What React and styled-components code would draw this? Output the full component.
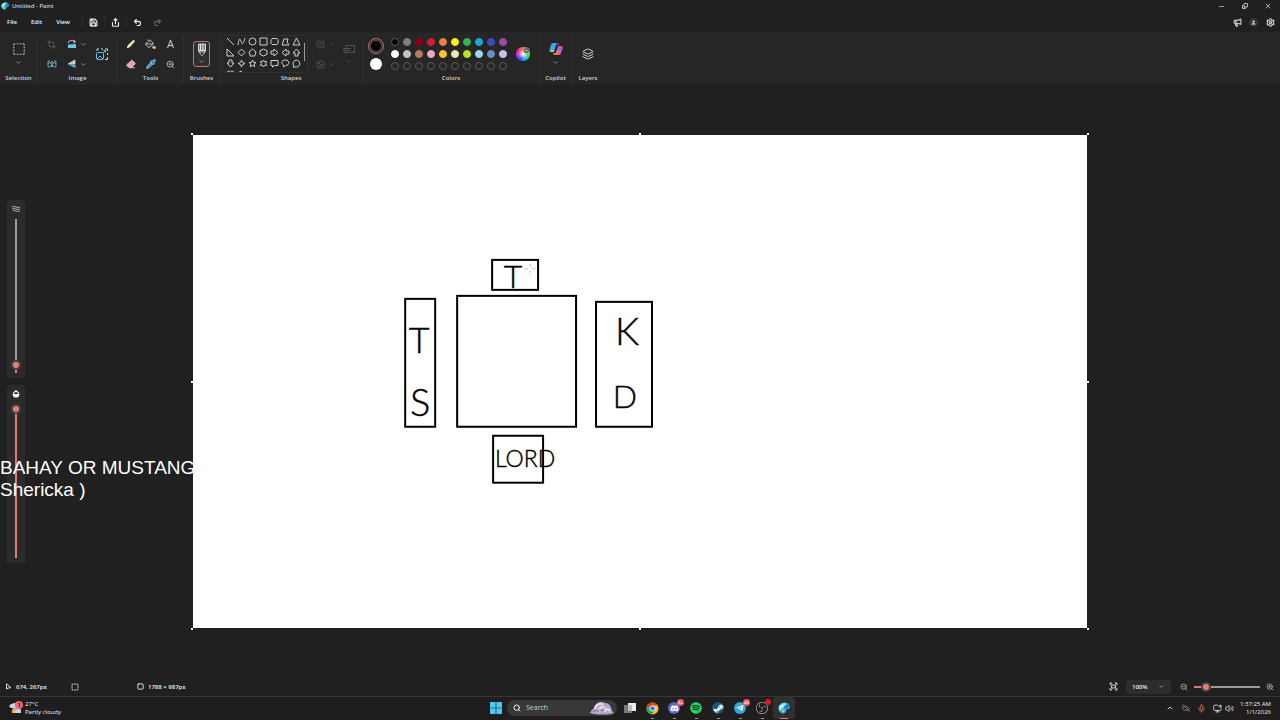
import React, { useState } from 'react'
import styled, { createGlobalStyle } from 'styled-components'
import {
  ChevronDown, ChevronUp, Crop, Eraser, Fullscreen, Layers, Megaphone, Mic, Minus, MonitorDot,
  Pipette, PaintBucket, Redo2, Save, Settings, Share, Square, SquareDashed, SquarePen,
  Undo2, User, Volume2, X, ZoomIn, ZoomOut, Search, CloudOff, Copy, ImageOff,
} from 'lucide-react'
import { FaDiscord, FaSpotify, FaSteamSymbol, FaTelegramPlane } from 'react-icons/fa'
import { SiObsstudio } from 'react-icons/si'

const PALETTE = [
  '#000000', '#7f7f7f', '#880015', '#d81b2c', '#e8823c', '#fdf01e', '#35b552', '#1ea5dc', '#4048bd', '#a04aa2',
  '#ffffff', '#c3c3c3', '#b97a57', '#f0a6c5', '#fbc623', '#eee4b0', '#b5e61d', '#99d9ea', '#6f8fc4', '#c8bfe7',
]

const SHAPES = [
  ['Line', 'M1 1L8 8'],
  ['Curve', 'M1 8C2 1 3 1 4 4S6 9 8 1'],
  ['Oval', 'M4.500 1a3.500 3.500 0 1 0 0 7a3.500 3.500 0 1 0 0-7z'],
  ['Rectangle', 'M1 1h7v7H1z'],
  ['Rounded rectangle', 'M2 1.500h5l1 1v4l-1 1H2l-1-1v-4z'],
  ['Polygon', 'M1 8L3 2h4L6 5l2 3z'],
  ['Triangle', 'M4.500 1L8 8H1z'],
  ['Right triangle', 'M1 1v7h7z'],
  ['Diamond', 'M4.500 1L8 4.500 4.500 8 1 4.500z'],
  ['Pentagon', 'M4.500 1L8 4 6.700 8H2.300L1 4z'],
  ['Hexagon', 'M4.500 1L8 2.700v3.600L4.500 8 1 6.300V2.700z'],
  ['Right arrow', 'M1 3h3V1l4 3.500L4 8V6H1z'],
  ['Left arrow', 'M8 3H5V1L1 4.500 5 8V6h3z'],
  ['Up arrow', 'M3 8V5H1l3.500-4L8 5H6v3z'],
  ['Down arrow', 'M3 1v3H1l3.500 4L8 4H6V1z'],
  ['Four-point star', 'M4.500 1l1 2.500 2.500 1-2.500 1-1 2.500-1-2.500-2.500-1 2.500-1z'],
  ['Five-point star', 'M4.500 1l1 2.300 2.500.2-1.900 1.600.6 2.600-2.200-1.300-2.200 1.300.6-2.600L1 3.500l2.500-.2z'],
  ['Six-point star', 'M4.500 1l1 1.700h2.200L6.600 4.500l1.100 1.800H5.500l-1 1.700-1-1.700H1.300l1.100-1.800-1.100-1.800h2.200z'],
  ['Rectangular callout', 'M1 1.500h7v5H4.500L2.500 8V6.500H1z'],
  ['Oval callout', 'M4.500 1C9 1 9 6.500 4.500 6.500L2.500 8V6C0 5 0 1 4.500 1z'],
  ['Cloud callout', 'M2 7a3.400 3.400 0 1 1 2 1H1z'],
  ['Heart', 'M4.500 8L1 4C0 1 4 0 4.500 2.500 5 0 9 1 8 4z'],
  ['Lightning', 'M1 3l3-2 4 7-4-3z'],
]

const HANDLES = [
  [0, 0], [50, 0], [100, 0], [0, 50], [100, 50], [0, 100], [50, 100], [100, 100],
]

function Chevron({ dim }) {
  return <ChevronDown size={7} color={dim ? '#5c5c5c' : '#c8c8c8'} />
}

function RotateIcon() {
  return (
    <svg width="10" height="10" viewBox="0 0 10 10" fill="none">
      <path d="M1 4C2 1 5 1 8 2.500M6.500 1L8.500 2.700 6.300 4" stroke="#d8d8d8" />
      <path d="M1 5.500L9 5v4H1z" fill="#6fc4e8" />
    </svg>
  )
}

function FlipIcon() {
  return (
    <svg width="10" height="10" viewBox="0 0 10 10" fill="none">
      <path d="M8 1L1 5h7z" fill="#b9c6cc" stroke="#d8d8d8" strokeWidth=".8" />
      <path d="M1 5.500h7.500V9z" fill="#5db4dc" />
    </svg>
  )
}

function RemoveBackgroundIcon() {
  return (
    <svg width="10" height="10" viewBox="0 0 10 10" fill="none">
      <path d="M3 2H1v6h2M7 2h2v6H7M1 5l2-2M9 5L7 3" stroke="#8bb2c4" strokeWidth=".8" />
      <circle cx="5" cy="4" r="1.300" stroke="#9ed1e9" strokeWidth=".8" />
      <path d="M3.200 8c0-3 3.600-3 3.600 0z" fill="#4ba7d0" />
    </svg>
  )
}

function ResizeIcon() {
  return (
    <svg width="14" height="14" viewBox="0 0 14 14" fill="none">
      <path d="M2 4V2h2M6 2h2M10 2h2.500v2M12.500 6v2M12.500 10v2.500H10" stroke="#c6dbe5" />
      <rect x="1.500" y="5.500" width="7" height="7" rx="1" stroke="#5bbce8" />
      <path d="M2 12l3-3 3 3M8 6l2.500-2.500M8.500 3.500h2v2" stroke="#5bbce8" />
    </svg>
  )
}

function PencilIcon() {
  return (
    <svg width="10" height="10" viewBox="0 0 10 10">
      <path d="M1 9l1-3 5.500-5.200L9 2.300 4 8z" fill="#f0e79a" />
      <path d="M1 9l.7-2 1.400 1.300z" fill="#fff" />
    </svg>
  )
}

function FillIcon() {
  return (
    <FillDrawing>
      <PaintBucket size={10} color="#c9dde6" />
      <svg width="3" height="3" viewBox="0 0 3 3"><circle cx="1.500" cy="1.500" r="1.500" fill="#e9a878" /></svg>
    </FillDrawing>
  )
}

function BrushIcon() {
  return (
    <svg width="10" height="14" viewBox="0 0 10 14">
      <path d="M1.500 1h7v7L5 13 1.500 8z" fill="#77797b" stroke="#d5d5d5" />
      <path d="M3.500 1v6M6 1v6M2 7.500h6" stroke="#e8e8e8" />
      <path d="M3.500 10h3L5 13z" fill="#202020" />
    </svg>
  )
}

function ColorWheelIcon() {
  return (
    <Wheel>
      <svg width="7" height="7" viewBox="0 0 7 7">
        <circle cx="3.500" cy="3.500" r="2.700" fill="#444" stroke="#999" />
        <path d="M3.500 2v3M2 3.500h3" stroke="#ccc" strokeWidth=".7" />
      </svg>
    </Wheel>
  )
}

function CopilotIcon() {
  return (
    <svg width="14" height="14" viewBox="0 0 14 14">
      <path d="M4 1h4c1 0 1.500 1 1.800 2H7L5 10H2C0 10 0 8 1 6l1-3c.4-1.300 1-2 2-2z" fill="#39a8e8" />
      <path d="M2 8h3l-.6 2H2C1 10 1 9 2 8z" fill="#f3bf48" />
      <path d="M10 13H6c-1 0-1.500-1-1.800-2H7l2-7h3c2 0 2 2 1 4l-1 3c-.4 1.300-1 2-2 2z" fill="#dc5a9b" />
      <path d="M8.500 6h4.800l-1 3H7.700z" fill="#9b62df" />
      <path d="M4.200 11H7l.6-2.500h3L10 13H6c-1 0-1.500-1-1.800-2z" fill="#ed775d" />
      <path d="M7 1h1c1 0 1.500 1 1.800 2H7z" fill="#315ec8" />
    </svg>
  )
}

function PaintLogo({ size }) {
  return (
    <svg width={size} height={size} viewBox="0 0 12 12">
      <path d="M6 .5c4-.5 6.500 3 5.500 5.500-.8 1.500-2.500.5-3 1.600C8 9 8 11 5.500 11.500 2 11.500 0 8 .5 5 1.300 2.500 3 .8 6 .5z" fill="#35b6df" />
      <path d="M1 4L6 1l2 1-5 6-2 .3z" fill="#9be4f5" />
      <path d="M6 5l4-3 1.500 2-4 3z" fill="#1876b8" />
      <circle cx="4" cy="4" r="1" fill="#fff" />
      <circle cx="5" cy="9" r="1" fill="#f2c15b" />
    </svg>
  )
}

function ChromeLogo() {
  return (
    <svg width="13" height="13" viewBox="0 0 24 24">
      <circle cx="12" cy="12" r="11" fill="#fbc116" />
      <path d="M2.500 6.500A11 11 0 0 1 21.500 6.500H12L7.500 14.500z" fill="#e33b2e" />
      <path d="M2.500 6.500A11 11 0 0 0 11 23l5.500-8.500h-9z" fill="#2ba24c" />
      <circle cx="12" cy="12" r="5.500" fill="#fff" />
      <circle cx="12" cy="12" r="4.200" fill="#2f7de1" />
    </svg>
  )
}

function WindowsLogo() {
  return (
    <svg width="12" height="12" viewBox="0 0 12 12">
      <path d="M0 0h5.700v5.700H0zM6.300 0H12v5.700H6.300zM0 6.300h5.700V12H0zM6.300 6.300H12V12H6.300z" fill="#4cc8f2" />
    </svg>
  )
}

function TaskViewIcon() {
  return (
    <svg width="12" height="12" viewBox="0 0 12 12">
      <path d="M0 3h8v8H0z" fill="#777" />
      <path d="M4 1h8v8H4z" fill="#ededed" />
      <path d="M4 3h4v6H4z" fill="#bcbcbc" />
    </svg>
  )
}

function SearchArt() {
  return (
    <svg width="26" height="14" viewBox="0 0 26 14">
      <path d="M1 12C3 8 4 9 6 5 8 1 12 0 16 2c5 0 6 4 7 8l2 2c-6 2-18 2-24 0z" fill="#b7a8cc" />
      <path d="M6 8c0-4 5-7 8-4M11 11C9 7 13 4 16 7M16 11c0-3 3-4 5-1" fill="none" stroke="#e6ddec" strokeWidth="2" />
      <path d="M10 9c2 2 4-1 5 1M4 11c3-2 4-2 6 0" fill="none" stroke="#75678e" />
    </svg>
  )
}

function WeatherIcon() {
  return (
    <svg width="14" height="14" viewBox="0 0 14 14">
      <path d="M3 12a3 3 0 0 1 9-3v3z" fill="#f4a24b" />
      <path d="M2 7a2 2 0 0 1 1-4 3 3 0 0 1 5 1v3zM6 12a2 2 0 0 1 1-3 3 3 0 0 1 5 1v2z" fill="#bdd7f4" />
      <circle cx="10" cy="4" r="4" fill="#ee6375" />
      <path d="M9.500 3l1-1v4" stroke="#671d2a" fill="none" />
    </svg>
  )
}

function PointerIcon() {
  return (
    <svg width="7" height="7" viewBox="0 0 7 7">
      <path d="M1.500.8v5.400L3 5l3-.3z" fill="none" stroke="#d8d8d8" />
    </svg>
  )
}

function Drawing() {
  return (
    <Artwork viewBox="193 135 894 493" role="img" aria-label="Seating plan">
      <g fill="none" stroke="#000" strokeWidth="2">
        <rect x="492" y="260" width="46" height="30" />
        <rect x="457" y="296" width="119" height="131" />
        <rect x="405" y="299" width="30" height="128" />
        <rect x="596" y="302" width="56" height="125" />
        <rect x="493" y="436" width="50" height="47" />
      </g>
      <g textAnchor="middle" fill="#000" stroke="#000" strokeWidth=".4">
        <text x="513" y="288" fontSize="32">T</text>
        <text x="419" y="353" fontSize="36">T</text>
        <text x="420" y="416" fontSize="38">S</text>
        <text x="627" y="345" fontSize="38">K</text>
        <text x="625" y="408" fontSize="32">D</text>
        <text x="525" y="467" fontSize="23">LORD</text>
      </g>
      <path d="M525 269h4M532 269h4M530 264v3M530 271v3" stroke="#999" strokeDasharray="1 1" />
    </Artwork>
  )
}

function App() {
  const [size, setSize] = useState(2)
  const [opacity, setOpacity] = useState(100)
  const [zoom, setZoom] = useState(12)

  return (
    <>
      <GlobalStyle />
      <Window>
        <TitleBar>
          <PaintLogo size={8} />
          <Title>Untitled - Paint</Title>
          <WindowControls>
            <WindowButton aria-label="Minimize"><Minus size={7} /></WindowButton>
            <WindowButton aria-label="Restore"><RestoreIcon size={6} strokeWidth={3} /></WindowButton>
            <WindowButton aria-label="Close"><X size={8} /></WindowButton>
          </WindowControls>
        </TitleBar>

        <MenuBar>
          <Menus>
            <MenuButton>File</MenuButton>
            <MenuButton>Edit</MenuButton>
            <MenuButton>View</MenuButton>
          </Menus>
          <QuickButton aria-label="Save"><Save size={9} strokeWidth={3} /></QuickButton>
          <QuickButton aria-label="Share"><Share size={9} strokeWidth={3} /></QuickButton>
          <QuickButton aria-label="Undo"><Undo2 size={9} strokeWidth={3} /></QuickButton>
          <HistoryButton aria-label="Redo" disabled><Redo2 size={9} strokeWidth={3} /></HistoryButton>
          <Account>
            <IconButton aria-label="Feedback"><Megaphone size={9} strokeWidth={3} /></IconButton>
            <Avatar aria-label="Account"><User size={5} fill="#ddd" /></Avatar>
            <IconButton aria-label="Settings"><Settings size={9} strokeWidth={3} /></IconButton>
          </Account>
        </MenuBar>

        <Ribbon>
          <Group $width={38}>
            <GroupBody>
              <StackButton aria-label="Select">
                <SquareDashed size={14} strokeWidth={2} />
                <Chevron />
              </StackButton>
            </GroupBody>
            <GroupLabel>Selection</GroupLabel>
          </Group>
          <Group $width={80}>
            <GroupBody>
              <ImageTools>
                <IconButton aria-label="Crop" disabled><Crop size={9} /></IconButton>
                <DropButton aria-label="Rotate"><RotateIcon /><Chevron /></DropButton>
                <IconButton aria-label="Remove background"><RemoveBackgroundIcon /></IconButton>
                <DropButton aria-label="Flip"><FlipIcon /><Chevron /></DropButton>
              </ImageTools>
              <ResizeButton aria-label="Resize"><ResizeIcon /></ResizeButton>
            </GroupBody>
            <GroupLabel>Image</GroupLabel>
          </Group>
          <Group $width={66}>
            <GroupBody>
              <ToolGrid>
                <IconButton aria-label="Pencil"><PencilIcon /></IconButton>
                <IconButton aria-label="Fill"><FillIcon /></IconButton>
                <IconButton>A</IconButton>
                <IconButton aria-label="Eraser"><Eraser size={10} color="#f3c4c4" fill="#e7a0a8" /></IconButton>
                <IconButton aria-label="Color picker"><Pipette size={10} color="#65bde8" strokeWidth={3} /></IconButton>
                <IconButton aria-label="Magnifier"><ZoomIn size={9} /></IconButton>
              </ToolGrid>
            </GroupBody>
            <GroupLabel>Tools</GroupLabel>
          </Group>
          <Group $width={36}>
            <GroupBody>
              <BrushButton aria-label="Brushes"><BrushIcon /><Chevron /></BrushButton>
            </GroupBody>
            <GroupLabel>Brushes</GroupLabel>
          </Group>
          <Group $width={143}>
            <ShapesBody>
              <ShapeBox>
                <ShapeList>
                  {SHAPES.map(([name, d]) => (
                    <ShapeButton key={name} aria-label={name}>
                      <svg width="9" height="9" viewBox="0 0 9 9" fill="none" stroke="#cfcfcf"><path d={d} /></svg>
                    </ShapeButton>
                  ))}
                </ShapeList>
                <ScrollThumb />
              </ShapeBox>
              <ShapeOptions>
                <DropButton aria-label="Outline" disabled><SquarePen size={9} /><Chevron dim /></DropButton>
                <DropButton aria-label="Shape fill" disabled><ImageOff size={9} /><Chevron dim /></DropButton>
              </ShapeOptions>
              <StackButton aria-label="Stroke size" disabled>
                <svg width="12" height="12" viewBox="0 0 12 12" fill="none" stroke="#555">
                  <path d="M3 4.500V2.500h8.500v7H7M0 5.500h8M0 7.500h7M1 9.500h5" />
                </svg>
                <Chevron dim />
              </StackButton>
            </ShapesBody>
            <GroupLabel>Shapes</GroupLabel>
          </Group>
          <Group $width={177}>
            <ColorsBody>
              <ActiveColors>
                <PrimaryColor aria-label="Color 1" />
                <SecondaryColor aria-label="Color 2" />
              </ActiveColors>
              <Swatches>
                {PALETTE.map(color => <Swatch key={color} $color={color} aria-label={color} />)}
                {[...Array(10)].map((_, i) => <Swatch key={i} aria-label="Empty color" />)}
              </Swatches>
              <WheelButton aria-label="Edit colors"><ColorWheelIcon /></WheelButton>
            </ColorsBody>
            <GroupLabel>Colors</GroupLabel>
          </Group>
          <Group $width={32}>
            <GroupBody>
              <StackButton aria-label="Copilot"><CopilotIcon /><Chevron /></StackButton>
            </GroupBody>
            <GroupLabel>Copilot</GroupLabel>
          </Group>
          <Group $width={33} $last>
            <GroupBody>
              <IconButton aria-label="Layers"><Layers size={12} /></IconButton>
            </GroupBody>
            <GroupLabel>Layers</GroupLabel>
          </Group>
        </Ribbon>

        <Workspace>
          <SideSliders>
            <SliderPanel>
              <svg width="8" height="8" viewBox="0 0 8 8">
                <path d="M0 2q2-1 4 0t4 0M0 4q2-1 4 0t4 0M1 6q2-1 3 0t4 0" fill="none" stroke="#aaa" />
              </svg>
              <VerticalRange $color="#9b9b9b" aria-label="Brush size" value={size} onChange={e => setSize(+e.target.value)} />
            </SliderPanel>
            <SliderPanel>
              <svg width="8" height="8" viewBox="0 0 8 8">
                <path d="M4 0C7 2 8 4 7 6S2 8 1 6 1 2 4 0z" fill="#fff" />
                <path d="M2 4c0-1 1-2 2-2s2 1 2 2z" fill="#222" />
              </svg>
              <VerticalRange $color="#e17b71" aria-label="Opacity" value={opacity} onChange={e => setOpacity(+e.target.value)} />
            </SliderPanel>
          </SideSliders>
          <Canvas>
            <Drawing />
            <Handles>
              {HANDLES.map(([x, y]) => <Handle key={`${x}-${y}`} $x={x} $y={y} />)}
            </Handles>
          </Canvas>
          <Caption>BAHAY OR MUSTANG<br />Shericka )</Caption>
        </Workspace>

        <StatusBar>
          <StatusItem><PointerIcon />674, 267px</StatusItem>
          <StatusItem><SquareDashed size={8} strokeWidth={3} /></StatusItem>
          <StatusItem><Square size={7} strokeWidth={3} />1788 × 987px</StatusItem>
          <ZoomControls>
            <IconButton aria-label="Fit to window"><Fullscreen size={9} strokeWidth={3} /></IconButton>
            <ZoomField>
              <ZoomSelect aria-label="Zoom level" defaultValue="100%">
                <option>50%</option>
                <option>100%</option>
                <option>200%</option>
              </ZoomSelect>
              <Chevron />
            </ZoomField>
            <IconButton aria-label="Zoom out"><ZoomOut size={8} /></IconButton>
            <ZoomRange aria-label="Zoom" value={zoom} onChange={e => setZoom(+e.target.value)} />
            <IconButton aria-label="Zoom in"><ZoomIn size={8} /></IconButton>
          </ZoomControls>
        </StatusBar>

        <TaskBar>
          <Weather>
            <WeatherIcon />
            <Lines><span>27°C</span><span>Partly cloudy</span></Lines>
          </Weather>
          <Apps>
            <AppButton aria-label="Start"><WindowsLogo /></AppButton>
            <SearchField>
              <Search size={8} strokeWidth={3} />
              <SearchInput placeholder="Search" aria-label="Search" />
              <SearchArt />
            </SearchField>
            <AppButton aria-label="Task view"><TaskViewIcon /></AppButton>
            <AppButton aria-label="Chrome" $open><ChromeLogo /></AppButton>
            <AppButton aria-label="Discord" $open>
              <Disc $bg="#5865d8"><FaDiscord size={9} /></Disc><Badge>9+</Badge>
            </AppButton>
            <AppButton aria-label="Spotify" $open><FaSpotify size={12} color="#24d663" /></AppButton>
            <AppButton aria-label="Steam" $open><Disc $bg="#14567f"><FaSteamSymbol size={11} /></Disc></AppButton>
            <AppButton aria-label="Telegram" $open>
              <Disc $bg="#31a5dc"><FaTelegramPlane size={8} /></Disc><Badge>43</Badge>
            </AppButton>
            <AppButton aria-label="OBS" $open><SiObsstudio size={12} color="#c9c9c9" /><RecordDot /></AppButton>
            <AppButton aria-label="Paint" $active><PaintLogo size={12} /></AppButton>
          </Apps>
          <Tray>
            <IconButton aria-label="Hidden icons"><ChevronUp size={8} strokeWidth={3} /></IconButton>
            <IconButton aria-label="OneDrive"><CloudOff size={8} color="#a0a0a0" /></IconButton>
            <IconButton aria-label="Microphone"><Mic size={9} color="#e2776c" /></IconButton>
            <SystemButton aria-label="Network and volume"><MonitorDot size={9} /><Volume2 size={9} /></SystemButton>
            <Clock><span>1:37:25 AM</span><span>1/1/2026</span></Clock>
          </Tray>
        </TaskBar>
      </Window>
    </>
  )
}

export default App

const GlobalStyle = createGlobalStyle`
  * {
    box-sizing: border-box;
  }

  body {
    margin: 0;
    background: #202020;
    color: #f0f0f0;
    font: 6px/8px "Open Sans", "Noto Sans", sans-serif;
    font-weight: 600;
  }

  button, input, select {
    margin: 0;
    padding: 0;
    border: 0;
    background: none;
    color: inherit;
    font: inherit;
  }

  svg {
    display: block;
    flex-shrink: 0;
  }
`;

const Window = styled.div`
  min-height: 100vh;
  display: flex;
  flex-direction: column;
`;

const TitleBar = styled.header`
  height: 12px;
  display: flex;
  align-items: center;
  gap: 3px;
  padding: 0 1px;
`;

const Title = styled.span`
  flex: 1;
  font-weight: 500;
`;

const WindowControls = styled.div`
  display: flex;
`;

const WindowButton = styled.button`
  width: 23px;
  display: flex;
  justify-content: center;
  align-items: center;
`;

const RestoreIcon = styled(Copy)`
  transform: scaleY(-1);
`;

const MenuBar = styled.nav`
  height: 20px;
  display: flex;
  align-items: center;
`;

const Menus = styled.div`
  width: 82px;
  display: flex;
  gap: 14px;
  padding-left: 7px;
`;

const MenuButton = styled.button`
  white-space: nowrap;
`;

const QuickButton = styled.button`
  width: 22px;
  height: 12px;
  display: flex;
  justify-content: center;
  align-items: center;
  border-left: 1px solid #2b2b2b;
`;

const HistoryButton = styled.button`
  width: 18px;
  display: flex;
  justify-content: center;
  align-items: center;

  &:disabled {
    color: #666;
  }
`;

const Account = styled.div`
  margin-left: auto;
  display: flex;
  align-items: center;
  gap: 7px;
  padding-right: 5px;
`;

const IconButton = styled.button`
  min-width: 10px;
  display: flex;
  justify-content: center;
  align-items: center;
  color: #d0d0d0;

  &:disabled {
    color: #686868;
  }
`;

const Avatar = styled.button`
  width: 9px;
  height: 9px;
  display: flex;
  justify-content: center;
  align-items: center;
  border-radius: 50%;
  background: #363636;
`;

const Ribbon = styled.section`
  height: 54px;
  display: flex;
  padding: 2px 0;
  background: #262626;
  border-bottom: 1px solid #1d1d1d;
`;

const Group = styled.div`
  width: ${props => props.$width}px;
  display: flex;
  flex-direction: column;
  align-items: center;
  border-right: 1px solid ${props => props.$last ? 'transparent' : '#2e2e2e'};
`;

const GroupBody = styled.div`
  height: 40px;
  flex-shrink: 0;
  display: flex;
  justify-content: center;
  align-items: center;
  gap: 6px;
`;

const GroupLabel = styled.span`
  color: #d2d2d2;
`;

const StackButton = styled.button`
  display: flex;
  flex-direction: column;
  align-items: center;
  gap: 3px;
  color: #c8c8c8;
`;

const ImageTools = styled.div`
  display: grid;
  grid-template-columns: 10px 22px;
  grid-template-rows: 20px 20px;
  column-gap: 10px;
`;

const DropButton = styled.button`
  display: flex;
  align-items: center;
  gap: 3px;

  &:disabled {
    color: #5a5a5a;
  }
`;

const ResizeButton = styled(IconButton)`
  width: 14px;
`;

const ToolGrid = styled.div`
  display: grid;
  grid-template-columns: repeat(3, 20px);
  grid-template-rows: 20px 20px;
  font-size: 11px;
  font-weight: 400;
`;

const FillDrawing = styled.span`
  display: flex;
  align-items: flex-end;

  svg + svg {
    margin-left: -2px;
  }
`;

const BrushButton = styled(StackButton)`
  width: 17px;
  height: 26px;
  justify-content: center;
  gap: 1px;
  border: 1px solid #c9716a;
  border-radius: 3px;
  background: #2e2e2e;
`;

const ShapesBody = styled(GroupBody)`
  gap: 8px;
  padding-right: 6px;
`;

const ShapeBox = styled.div`
  width: 86px;
  height: 38px;
  display: flex;
  align-items: flex-start;
  justify-content: space-between;
  padding: 0 2px;
  overflow: hidden;
  border: 1px solid #303030;
  border-radius: 2px;
`;

const ShapeList = styled.div`
  display: grid;
  grid-template-columns: repeat(7, 11px);
  grid-auto-rows: 11px;
`;

const ShapeButton = styled.button`
  display: flex;
  justify-content: center;
  align-items: center;
`;

const ScrollThumb = styled.span`
  width: 1px;
  height: 18px;
  margin-top: 7px;
  background: #999;
`;

const ShapeOptions = styled.div`
  display: grid;
  grid-template-rows: 20px 20px;
`;

const ColorsBody = styled(GroupBody)`
  gap: 7px;
  padding-right: 4px;
`;

const ActiveColors = styled.div`
  display: flex;
  flex-direction: column;
  align-items: center;
  gap: 4px;
`;

const PrimaryColor = styled.button`
  width: 16px;
  height: 16px;
  border: 1px solid #c9716a;
  border-radius: 50%;
  background: #000;
  box-shadow: inset 0 0 0 1px #262626, inset 0 0 0 2px #555;
`;

const SecondaryColor = styled.button`
  width: 12px;
  height: 12px;
  border-radius: 50%;
  background: #fff;
`;

const Swatches = styled.div`
  display: grid;
  grid-template-columns: repeat(10, 8px);
  grid-auto-rows: 8px;
  gap: 4px;
`;

const Swatch = styled.button`
  border: 1px solid ${props => props.$color && props.$color !== '#000000' ? props.$color : '#5b5b5b'};
  border-radius: 50%;
  background: ${props => props.$color || 'transparent'};
`;

const WheelButton = styled(IconButton)`
  margin-left: 2px;
`;

const Wheel = styled.span`
  width: 14px;
  height: 14px;
  display: flex;
  justify-content: flex-end;
  align-items: flex-start;
  border-radius: 50%;
  background: radial-gradient(#fff, transparent 50%), conic-gradient(#ff7a30, #fff034, #36e44b, #22bcff, #414dff, #c92bff, #ff2b86, #ff7a30);
`;

const Workspace = styled.main`
  position: relative;
  flex: 1;
  display: grid;
  grid-template-columns: 1fr 70% 1fr;
  align-items: center;
`;

const SideSliders = styled.aside`
  width: 18px;
  display: flex;
  flex-direction: column;
  gap: 7px;
  margin-left: 7px;
`;

const SliderPanel = styled.div`
  height: 178px;
  display: flex;
  flex-direction: column;
  align-items: center;
  gap: 6px;
  padding: 5px 0;
  border-radius: 3px;
  background: #2b2b2b;
`;

const VerticalRange = styled.input.attrs({ type: 'range' })`
  width: 12px;
  flex: 1;
  min-height: 0;
  appearance: none;
  writing-mode: vertical-lr;
  direction: rtl;

  &::-webkit-slider-runnable-track {
    width: 12px;
    background: linear-gradient(${props => props.$color} 96%, #e17b71 96%) center / 2px 100% no-repeat;
  }

  &::-webkit-slider-thumb {
    appearance: none;
    width: 10px;
    height: 10px;
    margin-left: 1px;
    border: 2px solid #454545;
    border-radius: 50%;
    background: #e77d72;
  }
`;

const Canvas = styled.div`
  position: relative;
  aspect-ratio: 1788 / 987;
  border: 1px solid #202020;
  background: #fff;
`;

const Artwork = styled.svg`
  width: 100%;
  height: 100%;
  font-family: Lato, "Open Sans", sans-serif;
  font-weight: 300;
`;

const Handles = styled.div`
  position: absolute;
  inset: -1px;
`;

const Handle = styled.span`
  position: absolute;
  left: ${props => props.$x}%;
  top: ${props => props.$y}%;
  width: 2px;
  height: 2px;
  transform: translate(-50%, -50%);
  background: #fff;
`;

const Caption = styled.p`
  position: absolute;
  left: 0;
  bottom: 176px;
  margin: 0;
  color: #fff;
  font: 19px/22px "Liberation Sans", Arial, sans-serif;
  white-space: nowrap;
`;

const StatusBar = styled.footer`
  height: 19px;
  display: flex;
  align-items: center;
  padding: 0 5px;
`;

const StatusItem = styled.span`
  width: 66px;
  display: flex;
  align-items: center;
  gap: 4px;
`;

const ZoomControls = styled.div`
  margin-left: auto;
  display: flex;
  align-items: center;
  gap: 5px;
`;

const ZoomField = styled.div`
  width: 45px;
  height: 14px;
  display: flex;
  align-items: center;
  margin: 0 3px;
  padding: 0 6px;
  border-radius: 2px;
  background: #2d2d2d;
`;

const ZoomSelect = styled.select`
  flex: 1;
  appearance: none;

  option {
    background: #2d2d2d;
  }
`;

const ZoomRange = styled.input.attrs({ type: 'range' })`
  width: 66px;
  height: 12px;
  appearance: none;

  &::-webkit-slider-runnable-track {
    height: 12px;
    background: linear-gradient(90deg, #e17b71 12%, #9b9b9b 12%) center / 100% 2px no-repeat;
  }

  &::-webkit-slider-thumb {
    appearance: none;
    width: 10px;
    height: 10px;
    margin-top: 1px;
    border: 2px solid #454545;
    border-radius: 50%;
    background: #e77d72;
  }
`;

const TaskBar = styled.footer`
  height: 24px;
  display: grid;
  grid-template-columns: 1fr auto 1fr;
  align-items: center;
  padding-bottom: 1px;
  border-top: 1px solid #363636;
  background: #1f1d1e;
`;

const Weather = styled.div`
  display: flex;
  align-items: center;
  gap: 2px;
  padding-left: 9px;
`;

const Lines = styled.div`
  display: flex;
  flex-direction: column;
  font-weight: 500;
`;

const Apps = styled.div`
  display: flex;
  align-items: center;
`;

const AppButton = styled.button`
  position: relative;
  width: 22px;
  height: 22px;
  display: flex;
  justify-content: center;
  align-items: center;
  border-radius: 3px;
  background: ${props => props.$active ? '#303030' : 'transparent'};

  &::after {
    content: "";
    position: absolute;
    bottom: 0;
    width: ${props => props.$active ? 8 : 3}px;
    height: 1px;
    background: ${props => props.$active ? '#e77d72' : props.$open ? '#999' : 'transparent'};
  }
`;

const Disc = styled.span`
  width: 12px;
  height: 12px;
  display: flex;
  justify-content: center;
  align-items: center;
  border-radius: 50%;
  background: ${props => props.$bg};
  color: #fff;
`;

const Badge = styled.span`
  position: absolute;
  top: 2px;
  right: 1px;
  min-width: 7px;
  padding: 0 1px;
  border-radius: 4px;
  background: #ee5960;
  color: #fff;
  font-size: 4px;
  line-height: 7px;
`;

const RecordDot = styled.span`
  position: absolute;
  top: 2px;
  right: 2px;
  width: 6px;
  height: 6px;
  border-radius: 50%;
  background: #dc1720;
`;

const SearchField = styled.label`
  width: 110px;
  height: 16px;
  display: flex;
  align-items: center;
  gap: 5px;
  margin-right: 2px;
  padding: 0 2px 0 6px;
  border-radius: 8px;
  background: #383838;
`;

const SearchInput = styled.input`
  flex: 1;
  min-width: 0;
  font-size: 7px;
  font-weight: 500;

  &::placeholder {
    color: #cfcfcf;
  }
`;

const Tray = styled.div`
  display: flex;
  justify-content: flex-end;
  align-items: center;
  gap: 6px;
  padding-right: 9px;
`;

const SystemButton = styled.button`
  display: flex;
  gap: 3px;
`;

const Clock = styled(Lines)`
  align-items: flex-end;
`;
